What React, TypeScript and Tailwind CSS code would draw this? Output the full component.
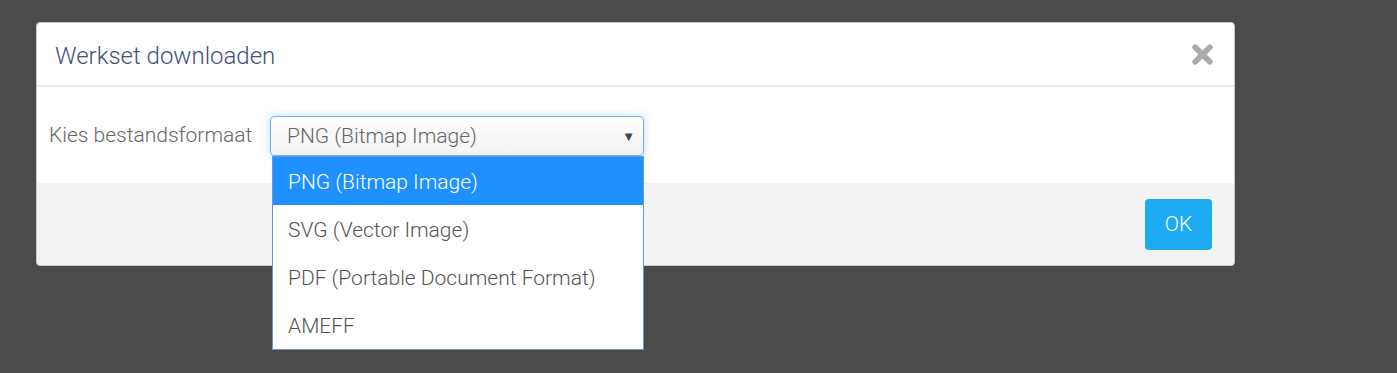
import React from "react";

export default function App() {
  const options = [
    "PNG (Bitmap Image)",
    "SVG (Vector Image)",
    "PDF (Portable Document Format)",
    "AMEFF",
  ];
  return (
    <div
      className="w-[1397px] h-[373px] bg-[#4b4b4b] pt-[22px] pl-[36px]"
      style={{ fontFamily: "Roboto, 'Noto Sans', sans-serif" }}
    >
      <div className="relative w-[1199px] rounded-[4px] border border-[#c8c8c8] bg-white overflow-visible">
        <div className="flex h-[64px] items-center justify-between border-b-2 border-[#ececec] pl-[18px] pr-[19px]">
          <h3 className="mt-[3px] text-[24px] font-light text-[#3f4f7f] leading-none">
            Werkset downloaden
          </h3>
          <svg width="25" height="25" viewBox="0 0 24 24" className="mt-[1px]">
            <path
              d="M5 5 L19 19 M19 5 L5 19"
              stroke="#a9a9a9"
              strokeWidth="5.5"
              strokeLinecap="round"
            />
          </svg>
        </div>
        <div className="flex h-[96px] items-start pl-[12px] pt-[29px]">
          <div className="flex h-[40px] w-[221px] items-center pb-[2px]">
            <label className="text-[21px] font-light text-[#666] leading-none">
              Kies bestandsformaat
            </label>
          </div>
          <div className="relative">
            <div className="flex h-[40px] w-[374px] items-center justify-between rounded-[4px] border border-[#76b0e6] bg-gradient-to-b from-white to-[#f2f2f2] pl-[16px] pr-[8px] pt-[2px] shadow-[0_0_8px_rgba(102,175,233,0.45)]">
              <span className="text-[21px] font-light text-[#666]">
                PNG (Bitmap Image)
              </span>
              <span className="text-[13px] text-[#444]">▼</span>
            </div>
            <ul className="absolute left-[2px] top-[40px] z-10 w-[372px] border border-[#6b93d6] bg-white">
              {options.map((o, i) => (
                <li
                  key={o}
                  className={
                    "flex h-[48px] items-center pl-[15px] pt-[3px] text-[21px] font-light " +
                    (i === 0 ? "bg-[#1e90ff] text-white" : "text-[#555]")
                  }
                >
                  {o}
                </li>
              ))}
            </ul>
          </div>
        </div>
        <div className="flex h-[82px] items-start justify-end rounded-b-[4px] bg-[#f3f3f3] pr-[22px] pt-[16px]">
          <button className="h-[51px] w-[67px] rounded-[4px] bg-[#1eabf1] text-[21px] text-white font-light">
            OK
          </button>
        </div>
      </div>
    </div>
  );
}
